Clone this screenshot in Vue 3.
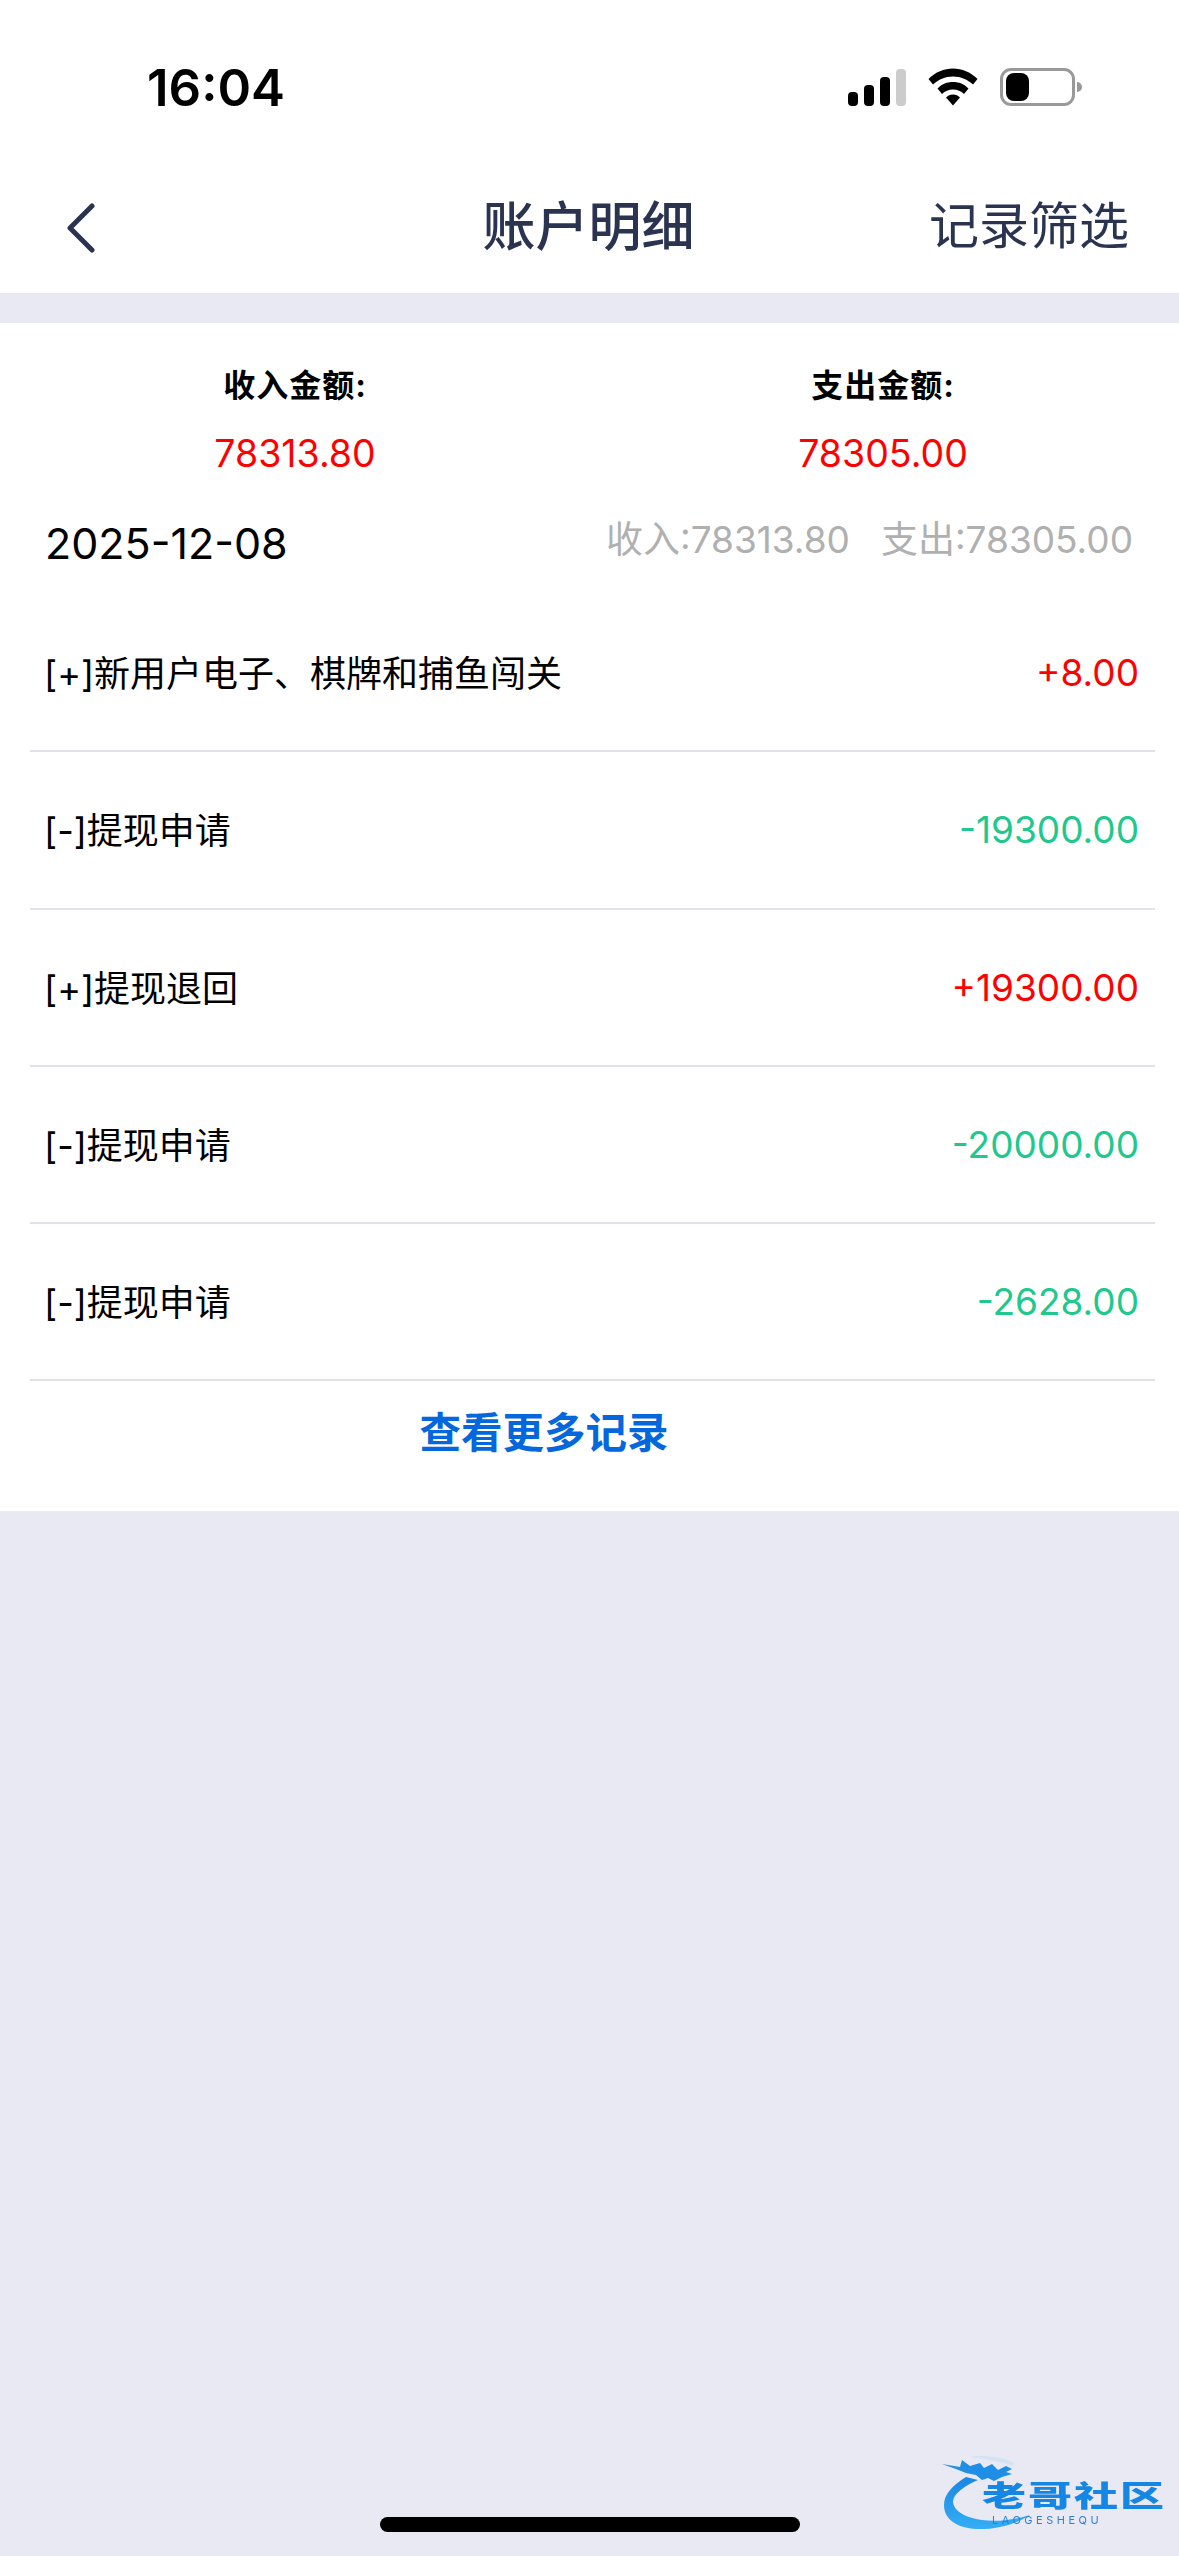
<template>
  <div class="page">
    <div class="status">
      <span class="time">16:04</span>
      <div class="status-icons">
        <svg class="signal" width="58" height="37" viewBox="0 0 58 37">
          <rect x="0" y="23" width="10" height="14" rx="4" fill="#000" />
          <rect x="16" y="16" width="10" height="21" rx="4" fill="#000" />
          <rect x="32" y="8" width="10" height="29" rx="4" fill="#000" />
          <rect x="48" y="0" width="10" height="37" rx="4" fill="#ccc" />
        </svg>
        <svg class="wifi" width="50" height="38" viewBox="0 0 50 37">
          <path d="M25 0C34 0 42.500 3.500 49.500 10.500L45 16C39.500 11 33 8 25 8C17 8 10.500 11 5 16L.5 10.500C7.500 3.500 16 0 25 0Z" fill="#000" />
          <path d="M25 13.500C31 13.500 36 15.500 40.500 20L36 25.500C33 22.500 29.500 21 25 21C20.500 21 17 22.500 14 25.500L9.500 20C14 15.500 19 13.500 25 13.500Z" fill="#000" />
          <path d="M25 26C28 26 30 27 32 29L25 37L18 29C20 27 22 26 25 26Z" fill="#000" />
        </svg>
        <div class="battery">
          <div class="battery-body"><div class="battery-level"></div></div>
          <div class="battery-cap"></div>
        </div>
      </div>
    </div>

    <div class="nav">
      <svg class="back" width="34" height="50" viewBox="0 0 34 50">
        <path d="M29 3L7 25L29 47" fill="none" stroke="#2a3350" stroke-width="5" stroke-linecap="round" stroke-linejoin="round" />
      </svg>
      <span class="nav-title">账户明细</span>
      <span class="nav-right">记录筛选</span>
    </div>

    <div class="card">
      <div class="summary">
        <div class="summary-col" v-for="item in summary" :key="item.label">
          <div class="summary-label">{{ item.label }}</div>
          <div class="summary-value">{{ item.value }}</div>
        </div>
      </div>

      <div class="date-row">
        <span class="date">2025-12-08</span>
        <div class="date-total">
          <span>收入:78313.80</span>
          <span>支出:78305.00</span>
        </div>
      </div>

      <div class="list">
        <div class="row" v-for="(row, i) in rows" :key="i">
          <span class="row-name">{{ row.name }}</span>
          <span class="row-amount" :class="row.amount[0] == '+' ? 'plus' : 'minus'">{{ row.amount }}</span>
        </div>
      </div>

      <div class="more">查看更多记录</div>
    </div>

    <div class="rest">
      <div class="logo">
        <svg class="dragon" width="100" height="76" viewBox="0 0 100 76">
          <defs>
            <linearGradient id="arc" x1="0" y1="0" x2="0" y2="1">
              <stop offset="0" stop-color="#1a86e2" />
              <stop offset="1" stop-color="#35aef5" />
            </linearGradient>
          </defs>
          <path d="M24 22C11 30 2 39 2 50C2 66 18 74 38 74C54 74 72 70 88 60C72 65 54 67 40 65C24 63 11 56 11 46C12 38 24 30 36 25Z" fill="url(#arc)" />
          <path d="M0 9L18 12L20 5L28 11L38 8L42 13L50 9L56 15L64 11L70 14L64 17L70 19L60 22L52 26L46 23L40 25L34 20L24 18L14 14Z" fill="#1e8ee6" />
          <path d="M26 2C40 0 60 1 72 8L70 11C60 6 44 4 26 2Z" fill="#d3e2f4" />
        </svg>
        <div class="logo-text">
          <div class="logo-name">老哥社区</div>
          <div class="logo-sub">LAOGESHEQU</div>
        </div>
      </div>
      <div class="home-bar"></div>
    </div>
  </div>
</template>

<script setup>
  const summary = [
    { label: '收入金额:', value: '78313.80' },
    { label: '支出金额:', value: '78305.00' },
  ]

  const rows = [
    { name: '[+]新用户电子、棋牌和捕鱼闯关', amount: '+8.00' },
    { name: '[-]提现申请', amount: '-19300.00' },
    { name: '[+]提现退回', amount: '+19300.00' },
    { name: '[-]提现申请', amount: '-20000.00' },
    { name: '[-]提现申请', amount: '-2628.00' },
  ]
</script>

<style>
  html, body {
    margin: 0;
    background: #e9e9f3;
  }
</style>

<style scoped>
  .page {
    width: 1179px;
    height: 2556px;
    overflow: hidden;
    background: #e9e9f3;
    display: flex;
    flex-direction: column;
    font-family: Inter, "Noto Sans CJK SC", sans-serif;
  }

  .status {
    height: 165px;
    background: #fff;
    display: flex;
    justify-content: space-between;
    align-items: flex-end;
    box-sizing: border-box;
    padding: 0 97px 57px 147px;
  }
  .time {
    font-size: 51px;
    line-height: 50px;
    font-weight: 600;
    color: #000;
    margin-bottom: -5px;
  }
  .status-icons {
    display: flex;
    align-items: center;
    gap: 22px;
    margin-bottom: 2px;
  }
  .battery {
    display: flex;
    align-items: center;
    gap: 2px;
  }
  .battery-body {
    width: 75px;
    height: 38px;
    box-sizing: border-box;
    border: 3px solid #999;
    border-radius: 11px;
    padding: 2px 3px;
  }
  .battery-level {
    width: 23px;
    height: 100%;
    background: #000;
    border-radius: 8px;
  }
  .battery-cap {
    width: 5px;
    height: 10px;
    background: #999;
    border-radius: 0 5px 5px 0;
  }

  .nav {
    height: 128px;
    background: #fff;
    display: flex;
    align-items: center;
    justify-content: space-between;
    padding: 0 50px 0 63px;
    position: relative;
    color: #2a3350;
  }
  .back {
    margin-bottom: 2px;
  }
  .nav-title {
    position: absolute;
    left: -2px;
    right: 0;
    bottom: 31px;
    text-align: center;
    font-size: 53px;
    line-height: 70px;
    font-weight: 500;
  }
  .nav-right {
    font-size: 50px;
    line-height: 70px;
    margin-bottom: 6px;
  }

  .card {
    margin-top: 30px;
    background: #fff;
    padding-top: 43px;
  }

  .summary {
    display: flex;
    padding-left: 1px;
  }
  .summary-col {
    width: 588px;
    text-align: center;
  }
  .summary-label {
    font-size: 32px;
    line-height: 40px;
    font-weight: 700;
    letter-spacing: 1px;
    color: #000;
  }
  .summary-value {
    margin-top: 28px;
    font-size: 37.500px;
    line-height: 40px;
    color: #f00;
  }

  .date-row {
    display: flex;
    justify-content: space-between;
    align-items: center;
    padding: 0 46px 0 45px;
    margin-top: 44px;
    height: 50px;
  }
  .date {
    font-size: 43px;
    color: #000;
  }
  .date-total {
    display: flex;
    gap: 31px;
    font-size: 37px;
    color: #b0b0b0;
    margin-bottom: 12px;
  }

  .list {
    margin: 27px 24px 0 30px;
  }
  .row {
    height: 157.250px;
    box-sizing: border-box;
    border-bottom: 2px solid #e1e1e9;
    display: flex;
    justify-content: space-between;
    align-items: center;
    padding: 0 16px 0 14px;
    font-size: 36px;
  }
  .row-name {
    color: #000;
    margin-bottom: 3px;
  }
  .row-amount {
    font-size: 37px;
  }
  .plus {
    color: #f00;
  }
  .minus {
    color: #20c88e;
  }

  .more {
    height: 130px;
    width: 1088px;
    display: flex;
    align-items: flex-start;
    justify-content: center;
    padding-top: 27px;
    box-sizing: border-box;
    font-size: 41.500px;
    line-height: 50px;
    font-weight: 700;
    color: #0567dc;
  }

  .rest {
    flex: 1;
    position: relative;
  }
  .logo {
    position: absolute;
    left: 942px;
    bottom: 26px;
    width: 220px;
    height: 75px;
    filter: blur(0.6px);
  }
  .dragon {
    position: absolute;
    left: 0;
    top: 0;
  }
  .logo-text {
    position: absolute;
    left: 40px;
    top: 28px;
    white-space: nowrap;
  }
  .logo-name {
    font-size: 44px;
    line-height: 27px;
    height: 27px;
    font-weight: 900;
    letter-spacing: 2px;
    color: #1586e4;
    transform: scaleY(0.66);
    transform-origin: center;
  }
  .logo-sub {
    margin-top: 5px;
    font-size: 11px;
    line-height: 10px;
    letter-spacing: 3.500px;
    color: #2c80d8;
    padding-left: 10px;
  }
  .home-bar {
    position: absolute;
    left: 380px;
    bottom: 24px;
    width: 420px;
    height: 15px;
    border-radius: 8px;
    background: #000;
  }
</style>
